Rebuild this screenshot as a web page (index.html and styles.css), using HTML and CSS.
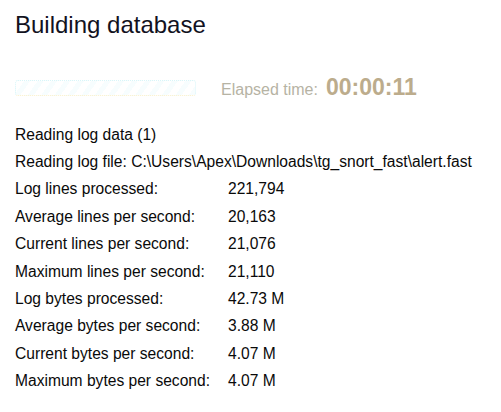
FILE: index.html
```html
<!DOCTYPE html>
<html>
<head>
<meta charset="utf-8">
<link rel="stylesheet" href="styles.css">
</head>
<body>
<div class="page">
  <h1 class="title">Building database</h1>
  <div class="progress-row">
    <div class="bar"></div>
    <span class="elapsed-label">Elapsed time:</span>
    <span class="elapsed-value">00:00:11</span>
  </div>
  <div class="stats">
    <div class="full">Reading log data (1)</div>
    <div class="full">Reading log file: C:\Users\Apex\Downloads\tg_snort_fast\alert.fast</div>
    <div>Log lines processed:</div><div>221,794</div>
    <div>Average lines per second:</div><div>20,163</div>
    <div>Current lines per second:</div><div>21,076</div>
    <div>Maximum lines per second:</div><div>21,110</div>
    <div>Log bytes processed:</div><div>42.73 M</div>
    <div>Average bytes per second:</div><div>3.88 M</div>
    <div>Current bytes per second:</div><div>4.07 M</div>
    <div>Maximum bytes per second:</div><div>4.07 M</div>
  </div>
</div>
</body>
</html>
```
FILE: styles.css
```css
html, body {
  margin: 0;
  padding: 0;
  background: #ffffff;
}
.page {
  padding: 11px 15px 0 15px;
  font-family: "Liberation Sans", Arial, sans-serif;
  color: #000000;
}
.title {
  margin: 0;
  font-size: 24px;
  font-weight: normal;
  line-height: 27.6px;
  color: #12121e;
}
.progress-row {
  display: flex;
  align-items: baseline;
  margin-top: 35px;
  height: 25px;
}
.bar {
  width: 179px;
  height: 14px;
  border: 1px dotted #d8f6f9;
  border-bottom-color: #fbf0c8;
  border-radius: 3px;
  background: repeating-linear-gradient(-55deg, #f7fdfe 0 5px, #ffffff 5px 11px);
  flex: none;
  position: relative;
  top: 1px;
}
.elapsed-label {
  margin-left: 25px;
  font-size: 16px;
  color: #b6b3a4;
}
.elapsed-value {
  margin-left: 8px;
  font-size: 23px;
  font-weight: bold;
  color: #bcac8c;
}
.stats {
  margin-top: 22px;
  display: grid;
  grid-template-columns: 213px auto;
  font-size: 15.6px;
  line-height: 27.4px;
  color: #0a0a0a;
}
.full {
  grid-column: 1 / 3;
  white-space: nowrap;
}
```
